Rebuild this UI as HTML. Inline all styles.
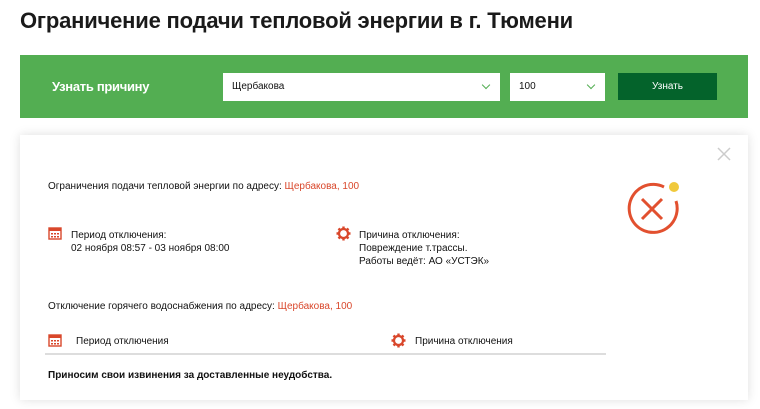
<!DOCTYPE html>
<html><head><meta charset="utf-8"><style>
*{margin:0;padding:0;box-sizing:border-box}
body{width:760px;height:409px;background:#fff;font-family:"Liberation Sans",sans-serif;color:#111;position:relative;overflow:hidden}
.a{position:absolute;white-space:nowrap}
h1{position:absolute;left:20px;top:8px;font-size:22px;font-weight:bold;color:#1a1a1a;letter-spacing:-0.2px}
.bar{position:absolute;left:20px;top:55px;width:728px;height:63px;background:#53ae52}
.sel{position:absolute;background:#fff;height:28px;top:73px;font-size:10px;line-height:28px;padding-left:9px}
.chev{position:absolute;top:9px;width:6px;height:6px;border-right:1.5px solid #53ae52;border-bottom:1.5px solid #53ae52;transform:rotate(45deg)}
.card{position:absolute;left:20px;top:135px;width:728px;height:265px;background:#fff;box-shadow:0 0 10px rgba(0,0,0,.13)}
.t{font-size:10px;line-height:13px}
.r{color:#d9472b}
</style></head><body>
<h1>Ограничение подачи тепловой энергии в г. Тюмени</h1>
<div class="bar"></div>
<div class="a" style="left:52px;top:79px;color:#fff;font-weight:bold;font-size:13px;letter-spacing:-0.3px">Узнать причину</div>
<div class="sel" style="left:223px;width:277px">Щербакова<span class="chev" style="left:260px"></span></div>
<div class="sel" style="left:510px;width:95px">100<span class="chev" style="left:78px"></span></div>
<div class="a" style="left:618px;top:73px;width:99px;height:27px;background:#04632b;color:#fff;font-size:10px;text-align:center;line-height:27px">Узнать</div>
<div class="card"></div>
<svg class="a" style="left:716px;top:146px" width="16" height="16"><path d="M2 2L14 14M14 2L2 14" stroke="#ccc" stroke-width="1.5"/></svg>
<svg class="a" style="left:620px;top:175px" width="70" height="70">
<path d="M44 12A24 24 0 1 0 56 26" fill="none" stroke="#e2502f" stroke-width="3"/>
<path d="M22 24L42 44M42 24L22 44" stroke="#e2502f" stroke-width="3"/>
<circle cx="54" cy="12" r="5" fill="#f0c93c"/></svg>
<div class="a t" style="left:48px;top:180px">Ограничения подачи тепловой энергии по адресу: <span class="r">Щербакова, 100</span></div>
<svg class="a" style="left:48px;top:226px" width="14" height="14"><rect x="1" y="2" width="12" height="11" fill="#fff" stroke="#d9472b" stroke-width="1.4"/><rect x="1" y="2" width="12" height="3" fill="#d9472b"/><g fill="#d9472b"><rect x="3" y="7" width="2" height="1.5"/><rect x="6" y="7" width="2" height="1.5"/><rect x="9" y="7" width="2" height="1.5"/><rect x="3" y="10" width="2" height="1.5"/><rect x="6" y="10" width="2" height="1.5"/><rect x="9" y="10" width="2" height="1.5"/></g></svg>
<div class="a t" style="left:71px;top:229px">Период отключения:<br>02 ноября 08:57 - 03 ноября 08:00</div>
<svg class="a" style="left:336px;top:226px" width="15" height="15"><circle cx="7.5" cy="7.5" r="4.5" fill="none" stroke="#d9472b" stroke-width="2.2"/><g stroke="#d9472b" stroke-width="2.4"><path d="M7.5 0.5V3M7.5 12V14.5M0.5 7.5H3M12 7.5H14.5M2.5 2.5L4.2 4.2M10.8 10.8L12.5 12.5M12.5 2.5L10.8 4.2M2.5 12.5L4.2 10.8"/></g></svg>
<div class="a t" style="left:359px;top:229px">Причина отключения:<br>Повреждение т.трассы.<br>Работы ведёт: АО «УСТЭК»</div>
<div class="a t" style="left:48px;top:300px">Отключение горячего водоснабжения по адресу: <span class="r">Щербакова, 100</span></div>
<svg class="a" style="left:48px;top:333px" width="14" height="14"><rect x="1" y="2" width="12" height="11" fill="#fff" stroke="#d9472b" stroke-width="1.4"/><rect x="1" y="2" width="12" height="3" fill="#d9472b"/><g fill="#d9472b"><rect x="3" y="7" width="2" height="1.5"/><rect x="6" y="7" width="2" height="1.5"/><rect x="9" y="7" width="2" height="1.5"/><rect x="3" y="10" width="2" height="1.5"/><rect x="6" y="10" width="2" height="1.5"/><rect x="9" y="10" width="2" height="1.5"/></g></svg>
<div class="a t" style="left:76px;top:335px">Период отключения</div>
<svg class="a" style="left:391px;top:333px" width="15" height="15"><circle cx="7.5" cy="7.5" r="4.5" fill="none" stroke="#d9472b" stroke-width="2.2"/><g stroke="#d9472b" stroke-width="2.4"><path d="M7.5 0.5V3M7.5 12V14.5M0.5 7.5H3M12 7.5H14.5M2.5 2.5L4.2 4.2M10.8 10.8L12.5 12.5M12.5 2.5L10.8 4.2M2.5 12.5L4.2 10.8"/></g></svg>
<div class="a t" style="left:415px;top:335px">Причина отключения</div>
<div class="a" style="left:45px;top:353px;width:561px;height:2px;background:#ddd"></div>
<div class="a t" style="left:48px;top:369px;font-weight:bold">Приносим свои извинения за доставленные неудобства.</div>
</body></html>
